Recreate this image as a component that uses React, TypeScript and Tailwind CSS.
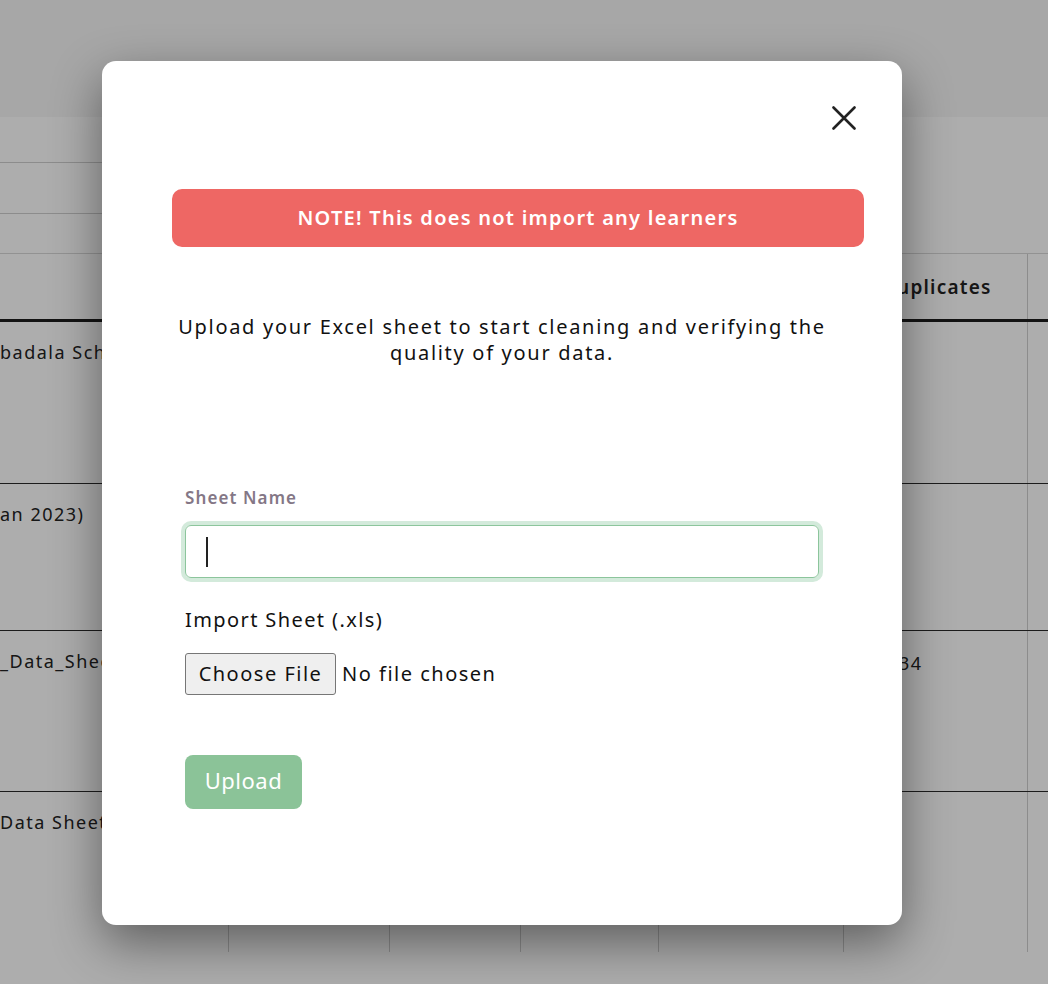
import React from "react";

const font = { fontFamily: '"Noto Sans", "Open Sans", sans-serif' };

function Cell({ children, first }: { children?: React.ReactNode; first?: boolean }) {
  return (
    <div className={"h-full " + (first ? "" : "border-l border-[#cfcfcf]")}>{children}</div>
  );
}

export default function App() {
  const cols = "grid grid-cols-[228px_161px_131px_138px_185px_184px_1fr]";
  const rows: { h: string; left: string; dup?: string }[] = [
    { h: "h-[162px]", left: "badala School" },
    { h: "h-[147px]", left: "an 2023)" },
    { h: "h-[161px]", left: "_Data_Sheet", dup: "34" },
    { h: "h-[160px]", left: "Data Sheet" },
  ];
  return (
    <div className="relative w-[1048px] h-[984px] overflow-hidden bg-white text-[#222]" style={font}>
      {/* underlying page */}
      <div className="h-[117px] bg-[#f6f6f6]" />
      <div className="h-[46px] w-[700px] border-b border-[#cfcfcf]" />
      <div className="h-[51px] w-[700px] border-b border-[#cfcfcf]" />
      <div className="h-[40px] border-b border-[#d8d8d8]" />
      <div className={cols + " h-[68px] border-b-[3px] border-[#1c1c1c]"}>
        <Cell first />
        <Cell />
        <Cell />
        <Cell />
        <Cell />
        <Cell>
          <div className="pl-[38px] pt-[19px] text-[19px] font-semibold tracking-[1.2px] whitespace-nowrap">Duplicates</div>
        </Cell>
        <Cell />
      </div>
      {rows.map((r, i) => (
        <div key={i} className={cols + " " + r.h + (i < rows.length - 1 ? " border-b border-[#2a2a2a]" : "")}>
          <Cell first>
            <div className="pt-[17px] text-[18px] tracking-[1.5px] whitespace-nowrap">{r.left}</div>
          </Cell>
          <Cell />
          <Cell />
          <Cell />
          <Cell />
          <Cell>
            {r.dup && <div className="pl-[55px] pt-[19px] text-[18px] tracking-[1.5px]">{r.dup}</div>}
          </Cell>
          <Cell />
        </div>
      ))}

      {/* overlay */}
      <div className="absolute inset-0 bg-black/[0.32]" />

      {/* modal */}
      <div className="absolute left-[102px] top-[61px] w-[800px] h-[864px] rounded-[14px] bg-white shadow-[0_18px_50px_rgba(0,0,0,0.45)] flex flex-col">
        <div className="flex justify-end pt-[45px] pr-[46px]">
          <svg width="24" height="24" viewBox="0 0 24 24" className="text-[#222]">
            <path d="M1.5 1.5 L22.5 22.5 M22.5 1.5 L1.5 22.5" stroke="currentColor" strokeWidth="2.6" strokeLinecap="round" />
          </svg>
        </div>
        <div className="ml-[70px] mt-[59px] w-[692px] h-[58px] rounded-[10px] bg-[#ee6764] flex items-center justify-center text-white text-[20px] font-semibold tracking-[1.25px]">
          NOTE! This does not import any learners
        </div>
        <p className="mx-auto mt-[67px] w-[690px] text-center text-[20px] leading-[26px] tracking-[1.7px] text-[#111]">
          Upload your Excel sheet to start cleaning and verifying the quality of your data.
        </p>
        <div className="ml-[83px] mt-[120px] text-[17px] leading-[24px] font-semibold tracking-[1.1px] text-[#847786]">Sheet Name</div>
        <div className="ml-[83px] mt-[15px] w-[634px] h-[53px] rounded-[6px] border border-[#8cc59c] ring-4 ring-[#d3eadb] flex items-center pl-[20px]">
          <div className="w-[2px] h-[30px] bg-[#222]" />
        </div>
        <div className="ml-[83px] mt-[29px] text-[20px] leading-[26px] tracking-[1.4px] text-[#111]">Import Sheet (.xls)</div>
        <div className="ml-[83px] mt-[20px] flex items-center">
          <div className="w-[151px] h-[42px] rounded-[3px] border border-[#767676] bg-[#efefef] flex items-center justify-center text-[20px] tracking-[1.5px] text-[#111]">
            Choose File
          </div>
          <span className="ml-[6px] text-[20px] tracking-[1.5px] text-[#111]">No file chosen</span>
        </div>
        <div className="ml-[83px] mt-[60px] w-[117px] h-[54px] rounded-[8px] bg-[#8bc398] flex items-center justify-center text-white text-[22px] tracking-[0.5px] pb-[3px]">
          Upload
        </div>
      </div>
    </div>
  );
}
